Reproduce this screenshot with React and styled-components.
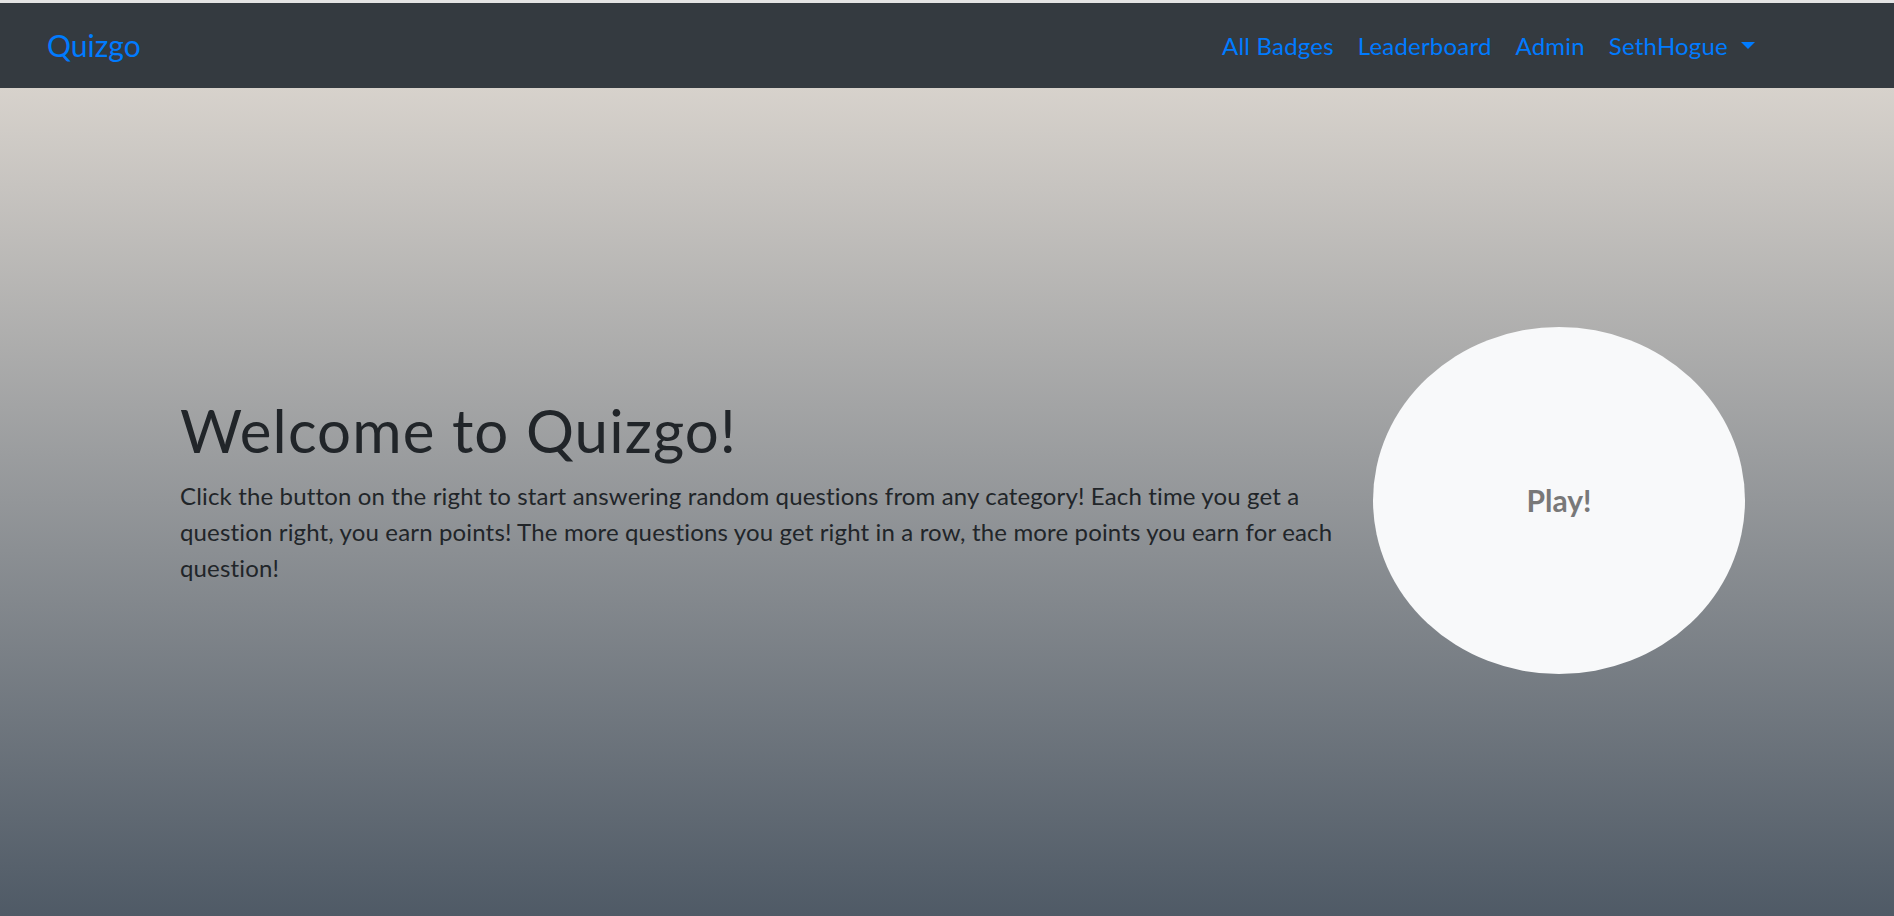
import React from 'react';
import styled, { createGlobalStyle } from 'styled-components';

const GlobalStyle = createGlobalStyle`
  html, body {
    margin: 0;
    padding: 0;
    height: 100%;
    overflow: hidden;
  }
  body {
    font-family: Lato, "Open Sans", "Noto Sans", sans-serif;
    color: #212529;
    background: #e4e4e4;
  }
`;

const Page = styled.div`
  padding-top: 3px;
  display: flex;
  flex-direction: column;
  height: 100vh;
  box-sizing: border-box;
`;

const Navbar = styled.nav`
  height: 85px;
  flex-shrink: 0;
  background: #343a40;
  display: flex;
  align-items: center;
  padding: 0 139px 0 47px;
`;

const Brand = styled.a`
  font-size: 30px;
  color: #007bff;
  text-decoration: none;
  margin-top: -2px;
`;

const NavList = styled.ul`
  list-style: none;
  margin: 0 0 0 auto;
  padding: 0;
  display: flex;
  align-items: center;
  gap: 24px;
`;

const NavLink = styled.a`
  font-size: 24px;
  letter-spacing: 0.2px;
  color: #007bff;
  text-decoration: none;
  display: flex;
  align-items: center;
`;

const Caret = styled.span`
  display: inline-block;
  margin-left: 13px;
  width: 0;
  height: 0;
  border-top: 7px solid #007bff;
  border-left: 7px solid transparent;
  border-right: 7px solid transparent;
`;

const Hero = styled.main`
  flex: 1;
  background: linear-gradient(#d7d2cc 0%, #4f5a66 100%);
  display: flex;
  align-items: center;
  padding-left: 180px;
`;

const TextCol = styled.div`
  width: 1180px;
`;

const Title = styled.h1`
  font-size: 60px;
  font-weight: 400;
  letter-spacing: 1.1px;
  line-height: 1.2;
  margin: 0 0 12px;
`;

const Lead = styled.p`
  font-size: 24px;
  letter-spacing: 0.15px;
  line-height: 36px;
  margin: 0 0 24px;
`;

const PlayButton = styled.button`
  margin: -4px 0 0 13px;
  width: 372px;
  height: 347px;
  flex-shrink: 0;
  border: none;
  border-radius: 50%;
  background: #f8f9fa;
  color: #787878;
  font-family: inherit;
  font-size: 30px;
  font-weight: 700;
  cursor: pointer;
`;

export default function App() {
  return (
    <>
      <GlobalStyle />
      <Page>
        <Navbar>
          <Brand href="#">Quizgo</Brand>
          <NavList>
            <li><NavLink href="#">All Badges</NavLink></li>
            <li><NavLink href="#">Leaderboard</NavLink></li>
            <li><NavLink href="#">Admin</NavLink></li>
            <li><NavLink href="#">SethHogue<Caret /></NavLink></li>
          </NavList>
        </Navbar>
        <Hero>
          <TextCol>
            <Title>Welcome to Quizgo!</Title>
            <Lead>
              Click the button on the right to start answering random questions from any category! Each time you get a question right, you earn points! The more questions you get right in a row, the more points you earn for each question!
            </Lead>
          </TextCol>
          <PlayButton>Play!</PlayButton>
        </Hero>
      </Page>
    </>
  );
}
